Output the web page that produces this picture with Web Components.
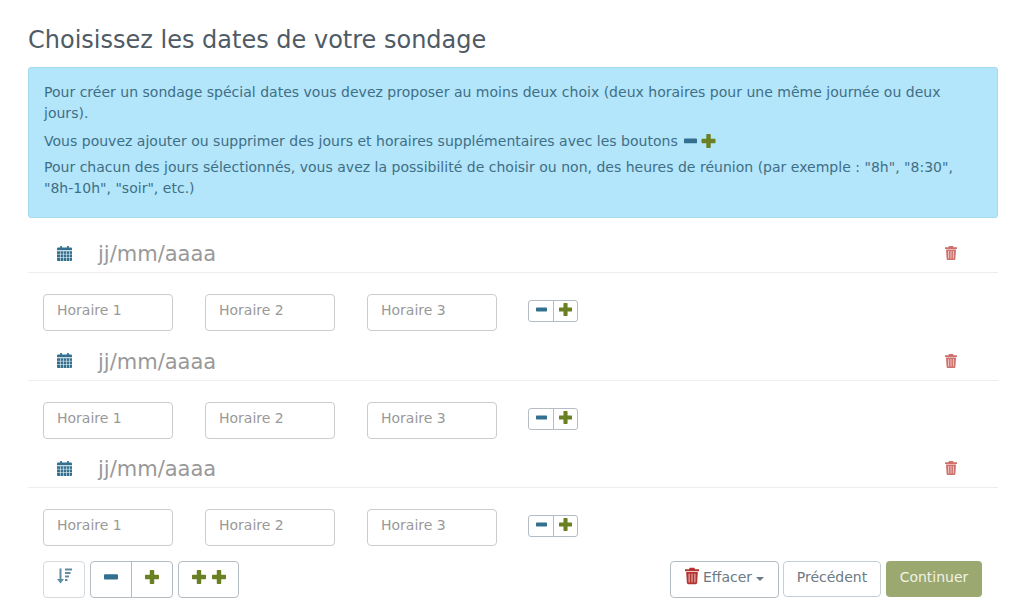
<!DOCTYPE html>
<html lang="fr"><head><meta charset="utf-8"><title>Sondage</title>
<style>
html,body{margin:0;padding:0;background:#fff}
body{font-family:"DejaVu Sans",sans-serif;font-size:14px;color:#555;width:1024px;height:613px;overflow:hidden}
</style></head><body>
<date-page></date-page>
<script>
const MINUS='<svg viewBox="0 0 12 12" fill="currentColor"><rect x="0" y="3.7" width="12" height="4.4" rx=".8"/></svg>';
const PLUS='<svg viewBox="0 0 12 12" fill="currentColor"><path d="M4.1 0.6q0-.6.6-.6h2.6q.6 0 .6.6V4.1h3.5q.6 0 .6.6v2.6q0 .6-.6.6H7.9v3.5q0 .6-.6.6H4.7q-.6 0-.6-.6V7.9H.6Q0 7.9 0 7.3V4.7q0-.6.6-.6h3.5z"/></svg>';
const TRASH='<svg viewBox="0 0 12 14" fill="currentColor"><path d="M4 0h4l.6 1.3H12v1.6H0V1.3h3.4zM1 3.6h10l-.6 9.2q-.1 1.2-1.2 1.2H2.8q-1.1 0-1.2-1.2z"/><g fill="#fff" fill-opacity=".55"><rect x="3" y="5" width="1.1" height="7.5"/><rect x="5.45" y="5" width="1.1" height="7.5"/><rect x="7.9" y="5" width="1.1" height="7.5"/></g></svg>';
const CAL='<svg viewBox="0 0 14 14" fill="currentColor"><path d="M3 0h1.6v1.5h4.8V0H11v1.5h2q1 0 1 1V4H0V2.5q0-1 1-1h2z"/><path d="M0 5h14v8q0 1-1 1H1q-1 0-1-1z"/><g fill="#fff" fill-opacity=".7"><rect x="0" y="7.3" width="14" height=".7"/><rect x="0" y="10.3" width="14" height=".7"/><rect x="2.9" y="5" width=".7" height="9"/><rect x="5.7" y="5" width=".7" height="9"/><rect x="8.5" y="5" width=".7" height="9"/><rect x="11.3" y="5" width=".7" height="9"/></g></svg>';
const SORT='<svg viewBox="0 0 15 15" fill="currentColor"><path d="M2.5 0h2v10.5H7L3.5 15 0 10.5h2.5z"/><rect x="8" y="0" width="7" height="2"/><rect x="8" y="3.5" width="5.5" height="2"/><rect x="8" y="7" width="4" height="2"/><rect x="8" y="10.5" width="2.5" height="2"/></svg>';
function def(name,html,render){
  customElements.define(name,class extends HTMLElement{
    constructor(){super();const r=this.attachShadow({mode:'open'});r.innerHTML=render?render(this):html;}
  });
}
def('ic-on','',el=>`<style>:host{display:inline-flex;line-height:0}svg{display:block;width:100%;height:100%}</style>${({minus:MINUS,plus:PLUS,trash:TRASH,cal:CAL,sort:SORT})[el.getAttribute('name')]}`);
def('info-box',`<style>
:host{display:block;box-sizing:border-box;height:151px;margin:0 26px 0 28px;padding:14px 15px;background:#b3e5fb;border:1px solid #a3dcee;border-radius:3px;font-size:14px;line-height:21px;letter-spacing:.012px;color:#3f6f85}
</style><slot></slot>`);
def('info-line',`<style>:host{display:block;margin-bottom:5px}:host([wide]){margin-bottom:7px}</style><slot></slot>`);
def('date-row',`<style>
:host{display:flex;align-items:center;box-sizing:border-box;height:37px;padding-bottom:2px;margin:0 26px 0 28px;border-bottom:1px solid #eceeef}
.cal{width:15px;height:15px;margin-left:29px;color:#33708f;flex:none}
.ph{margin-left:26px;flex:1;font-size:21px;color:#999;padding-top:2px}
.del{width:12px;height:14px;margin-right:41px;color:#c9625d;flex:none;opacity:.9}
</style><ic-on class="cal" name="cal"></ic-on><span class="ph"><slot></slot></span><ic-on class="del" name="trash"></ic-on>`);
def('time-field',`<style>
:host{display:flex;align-items:center;box-sizing:border-box;width:130px;height:37px;padding:0 13px 5px;border:1px solid #ccc;border-radius:4px;background:#fff;color:#999;font-size:14px}
</style><slot></slot>`);
def('mini-pair',`<style>
:host{display:inline-flex;box-sizing:border-box;width:50px;height:22px;border:1px solid #b4bdc3;border-radius:3px;background:#fff}
span{display:flex;align-items:center;justify-content:center;padding-bottom:3px}
.m{width:24px;color:#33708f}.p{flex:1;color:#6b7f23;border-left:1px solid #b4bdc3}
.m ic-on{width:11px;height:11px}.p ic-on{width:13px;height:13px}
</style><span class="m"><ic-on name="minus"></ic-on></span><span class="p"><ic-on name="plus"></ic-on></span>`);
def('time-row',`<style>
:host{display:flex;align-items:flex-start;height:37px;margin-left:43px}
time-field{margin-right:32px}
mini-pair{margin:6px 0 0 -1px}
</style><time-field>Horaire 1</time-field><time-field>Horaire 2</time-field><time-field>Horaire 3</time-field><mini-pair></mini-pair>`);
def('day-group',`<style>
:host{display:block;height:107.7px}
date-row{margin-bottom:21px}
</style><date-row>jj/mm/aaaa</date-row><time-row></time-row>`);
def('tool-btn',`<style>
:host{display:inline-flex;align-items:center;justify-content:center;box-sizing:border-box;height:37px;padding-bottom:5px;border:1px solid #b4bdc3;border-radius:4px;background:#fff;color:#7c868c;font-size:14px}
</style><slot></slot>`);
def('action-bar',`<style>
:host{display:flex;align-items:flex-start;height:37px;margin:0 42px 0 43px}
.sort{width:42px;border-color:#d5dade;margin-right:5px;color:#5f8ca3;padding-bottom:8px}
.sort ic-on{width:15px;height:16px}
.pair{width:83px;margin-right:5px;align-items:stretch;justify-content:flex-start;padding-bottom:0}
.pair span{display:flex;align-items:center;justify-content:center;padding-bottom:6px}
.pair .a{width:40px;border-right:1px solid #b4bdc3;color:#33708f}
.pair .b{flex:1;color:#6b7f23}
.pair ic-on{width:14px;height:14px}
.two{width:61px;color:#6b7f23;gap:6px;padding-bottom:6px}
.two ic-on{width:14px;height:14px}
.sp{flex:1}
.eff{width:109px;margin-right:4px;gap:4px;color:#6c7a84}
.eff .t{width:14px;height:18px;color:#b5332e;position:relative;top:-1px}
.eff i{display:block;width:0;height:0;border:4px solid transparent;border-top-color:#6c7a84;border-bottom:0;margin-top:3px}
.prev{width:98px;margin-right:5px;height:36px;border-color:#c5ced4;color:#6c7a84}
.next{width:96px;height:36px;border:0;background:#9ba86f;color:#f1f3e6}
</style>
<tool-btn class="sort"><ic-on name="sort"></ic-on></tool-btn>
<tool-btn class="pair"><span class="a"><ic-on name="minus"></ic-on></span><span class="b"><ic-on name="plus"></ic-on></span></tool-btn>
<tool-btn class="two"><ic-on name="plus"></ic-on><ic-on name="plus"></ic-on></tool-btn>
<span class="sp"></span>
<tool-btn class="eff"><ic-on class="t" name="trash"></ic-on><span>Effacer</span><i></i></tool-btn>
<tool-btn class="prev">Précédent</tool-btn>
<tool-btn class="next">Continuer</tool-btn>`);
def('date-page',`<style>
:host{display:block;padding-top:25px}
h1{margin:0 0 13px 28px;font-size:24px;font-weight:400;line-height:29px;color:#4f5b66;position:relative;top:1px}
.gl{display:inline-flex;height:14px;vertical-align:-2px;gap:4px;margin-left:2px}
.gl ic-on{height:14px}
.m{width:13px;color:#33708f}.p{width:15px;color:#6b7f23}
.days{margin-top:18px}
action-bar{margin-top:2px}
</style>
<h1>Choisissez les dates de votre sondage</h1>
<info-box>
<info-line wide>Pour créer un sondage spécial dates vous devez proposer au moins deux choix (deux horaires pour une même journée ou deux jours).</info-line>
<info-line>Vous pouvez ajouter ou supprimer des jours et horaires supplémentaires avec les boutons <span class="gl"><ic-on class="m" name="minus"></ic-on><ic-on class="p" name="plus"></ic-on></span></info-line>
<info-line>Pour chacun des jours sélectionnés, vous avez la possibilité de choisir ou non, des heures de réunion (par exemple : "8h", "8:30", "8h-10h", "soir", etc.)</info-line>
</info-box>
<div class="days"><day-group></day-group><day-group></day-group><day-group></day-group></div>
<action-bar></action-bar>`);
</script>
</body></html>
